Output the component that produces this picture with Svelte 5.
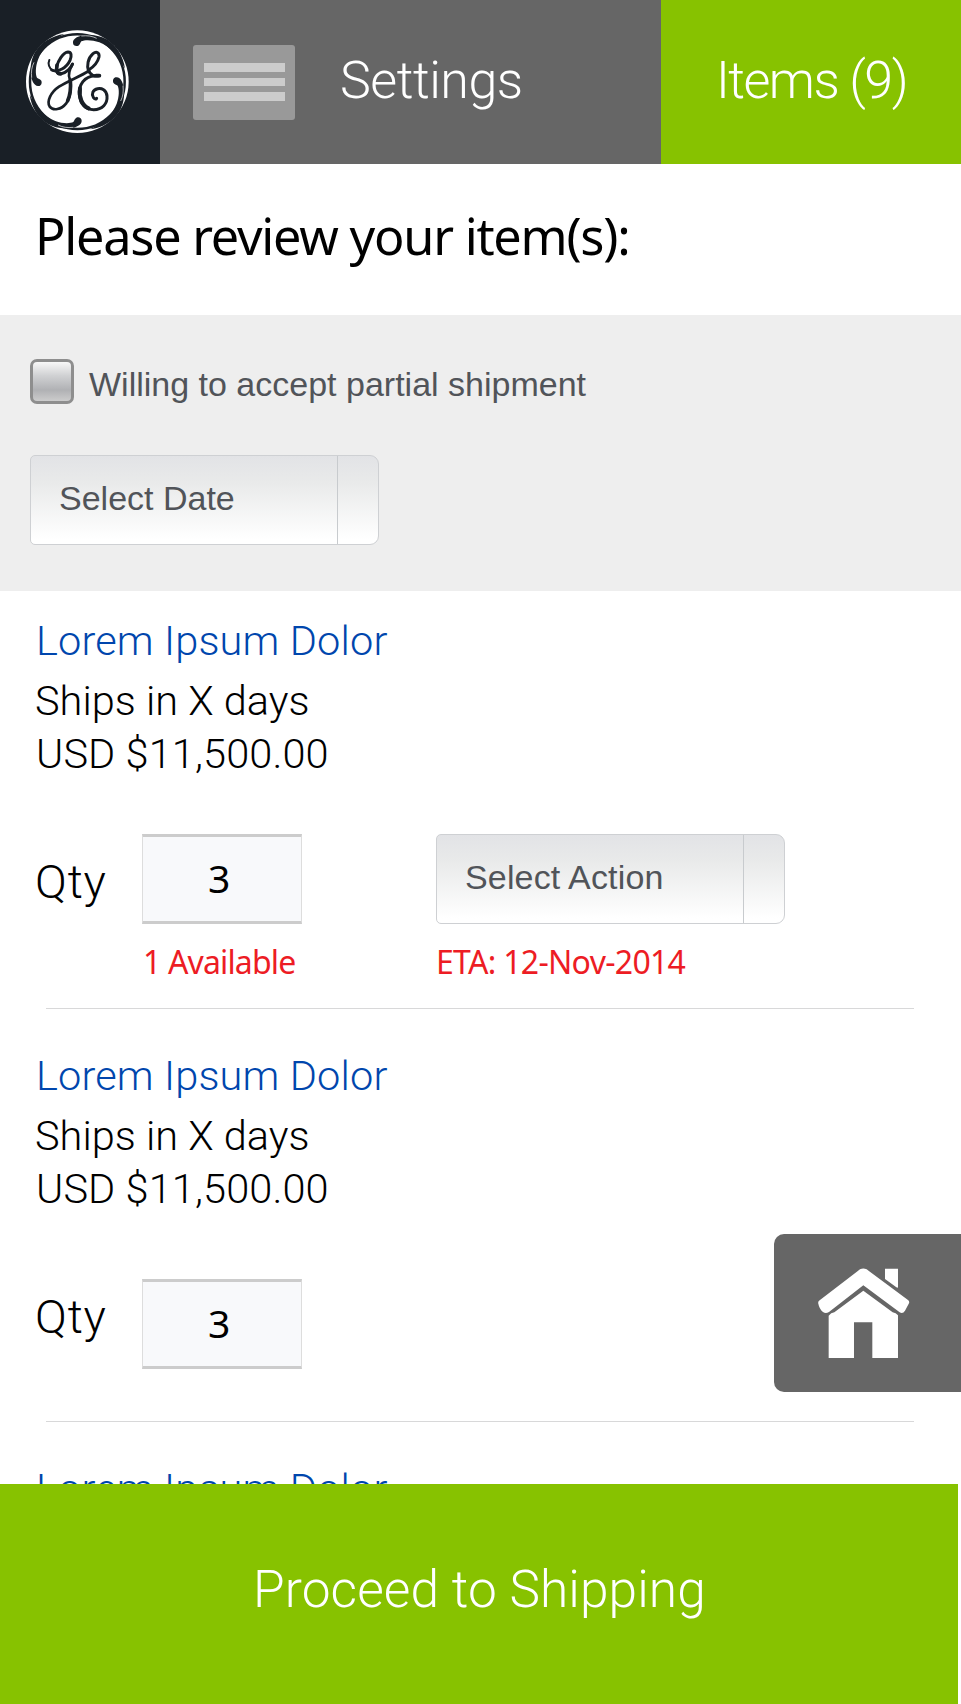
<script>
  const items = [
    {
      name: 'Lorem Ipsum Dolor',
      ships: 'Ships in X days',
      price: 'USD $11,500.00',
      qty: 3,
      available: '1 Available',
      action: 'Select Action',
      eta: 'ETA: 12-Nov-2014'
    },
    { name: 'Lorem Ipsum Dolor', ships: 'Ships in X days', price: 'USD $11,500.00', qty: 3 },
    { name: 'Lorem Ipsum Dolor' }
  ];
  const swirls = [0, 90, 180, 270];
</script>

<div class="screen">
  <header>
    <div class="brand">
      <svg viewBox="0 0 480 492" width="160" height="164" aria-hidden="true">
        <circle cx="232" cy="245" r="154" fill="#fff" />
        <circle cx="232" cy="245" r="142" fill="none" stroke="#191f26" stroke-width="7.5" />
        {#each swirls as angle}
          <path
            transform="rotate({angle} 232 245)"
            d="M219 128C218 115 237 106 260 105C286 104 304 109 320 118C350 136 370 169 375 206C355 167 329 139 298 127C277 119 254 119 244 124C241 128 240 134 235 137C227 140 219 136 219 128Z"
            fill="#191f26"
          />
          <path
            transform="rotate({angle} 232 245)"
            d="M244 108C262 106 276 108 290 115"
            fill="none"
            stroke="#fff"
            stroke-width="2"
          />
        {/each}
        <g fill="none" stroke="#191f26" stroke-linecap="round" stroke-linejoin="round">
          <path stroke-width="6" d="M148 180C143 191 147 205 158 211" />
          <path stroke-width="9" d="M155 210C174 219 200 203 210 181C216 166 214 156 204 156C189 157 174 183 170 200C167 217 175 225 185 221C200 217 213 204 217 193" />
          <path stroke-width="11" d="M171 195C168 212 172 222 182 221" />
          <path stroke-width="8" d="M218 192C208 209 204 224 209 236C215 254 214 288 198 311C184 329 159 333 149 320C139 304 153 276 177 260C206 242 239 230 266 213" />
          <path stroke-width="11" d="M211 240C213 263 211 284 203 302" />
          <path stroke-width="9" d="M266 216C259 197 264 174 279 161C290 152 299 159 297 171C293 188 277 203 266 210C270 226 284 231 299 227" />
          <path stroke-width="9" d="M285 227C253 229 236 254 238 283C240 313 257 329 281 329C307 329 323 311 321 288C319 269 305 264 293 266C278 269 274 282 280 292C284 298 290 298 290 295" />
          <path stroke-width="12" d="M240 265C236 292 247 317 266 325" />
          <path stroke-width="11" d="M288 227L298 227" />
        </g>
      </svg>
    </div>
    <div class="nav">
      <button class="menu" aria-label="Menu"><i></i><i></i><i></i></button>
      <span class="settings">Settings</span>
    </div>
    <div class="cart"><span>Items (9)</span></div>
  </header>

  <h1>Please review your item(s):</h1>

  <section class="options">
    <label class="partial">
      <span class="box"></span>
      <span class="caption">Willing to accept partial shipment</span>
    </label>
    <div class="select"><span>Select Date</span><b></b></div>
  </section>

  <main>
    {#each items as item}
      <article class:compact={!item.action}>
        <h2>{item.name}</h2>
        {#if item.qty}
          <p>{item.ships}</p>
          <p class="price">{item.price}</p>
          <div class="row">
            <span class="label">Qty</span>
            <div class="qty"><span>{item.qty}</span></div>
            {#if item.action}
              <div class="select action"><span>{item.action}</span><b></b></div>
            {/if}
          </div>
        {/if}
        {#if item.eta}
          <div class="notes">
            <span class="available">{item.available}</span>
            <span class="eta">{item.eta}</span>
          </div>
        {/if}
      </article>
    {/each}
  </main>

  <footer><span>Proceed to Shipping</span></footer>

  <button class="home" aria-label="Home">
    <svg viewBox="174 143 275 271" width="91.67" height="90.33" aria-hidden="true" fill="#fff">
      <path d="M300 147Q310 142 320 147L445 240Q449 244 447 249L435 271Q429 281 419 276L310 195L207 275Q197 281 189 275Q178 266 175 250Q173 244 179 240Z" />
      <path d="M310 211L398 276Q408 277 414 285V413H337V306H282V413H206V286Q213 277 223 276Z" />
      <path d="M375 145H414V202Q409 202 404 197L375 176Z" />
    </svg>
  </button>
</div>

<style>
  :global(body) {
    background: #fff;
    overflow: hidden;
  }
  .screen {
    position: relative;
    width: 961px;
    height: 1704px;
    overflow: hidden;
    background: #fff;
    color: #000;
    font-family: Roboto, sans-serif;
    font-weight: 300;
    white-space: nowrap;
  }
  h1, h2, p { margin: 0; }
  button { border: 0; margin: 0; padding: 0; }
  svg { display: block; }

  header {
    display: flex;
    height: 164px;
    color: #fff;
    font-size: 52px;
    line-height: 60px;
  }
  .brand {
    width: 160px;
    background: #191f26;
  }
  .nav {
    display: flex;
    align-items: center;
    width: 501px;
    box-sizing: border-box;
    padding-left: 33px;
    background: #666;
  }
  .menu {
    display: flex;
    flex-direction: column;
    justify-content: center;
    align-items: center;
    gap: 6px;
    width: 102px;
    height: 75px;
    border-radius: 3px;
    background: #999;
  }
  .menu i {
    width: 81px;
    height: 8.5px;
    background: #ccc;
  }
  .settings {
    margin-left: 45px;
    padding-bottom: 2px;
    letter-spacing: -0.5px;
  }
  .cart {
    display: flex;
    flex: 1;
    align-items: center;
    padding-left: 55px;
    background: #87c200;
    letter-spacing: -1.55px;
  }
  .cart span { padding-bottom: 2px; }

  h1 {
    height: 151px;
    padding-left: 35px;
    font: 400 50.4px/144px "Noto Sans", sans-serif;
    letter-spacing: -1.23px;
  }

  .options {
    box-sizing: border-box;
    height: 276px;
    padding: 44px 30px 0;
    background: #eee;
  }
  .partial {
    display: flex;
    align-items: center;
    height: 45px;
    color: #515459;
    font: 400 34px/40px "Liberation Sans", sans-serif;
  }
  .box {
    box-sizing: border-box;
    width: 44px;
    height: 45px;
    border: 3px solid #8e8e8e;
    border-radius: 7px;
    background: linear-gradient(#f8f8f8, #d0d1d3 35%, #b0b1b4 72%, #ccc);
  }
  .caption {
    margin-left: 15px;
    padding-top: 4px;
  }
  .options .select { margin-top: 51px; }

  .select {
    display: flex;
    box-sizing: border-box;
    width: 349px;
    height: 90px;
    border: 1px solid #ced0d3;
    border-radius: 5px 9px 9px 5px;
    background: linear-gradient(#e2e3e6, #e9eaea 30%, #fff 95%);
    color: #515459;
    font: 400 34px/84px "Liberation Sans", sans-serif;
  }
  .select span {
    flex: 1;
    padding-left: 28px;
  }
  .select b {
    width: 40px;
    border-left: 1px solid #c8cbce;
  }
  .action { letter-spacing: 0.15px; }

  main {
    height: 893px;
    overflow: hidden;
  }
  article {
    position: relative;
    box-sizing: border-box;
    height: 418px;
    padding: 20px 36px 0;
  }
  article.compact {
    height: 413px;
    padding-top: 37px;
  }
  article::after {
    content: '';
    display: block;
    width: 868px;
    height: 1px;
    margin: 10px 0 0 10px;
    background: #d8d8d9;
  }
  article.compact::after { margin-top: 51px; }
  h2 {
    margin-bottom: 3px;
    color: #0046ad;
    font-size: 41.5px;
    font-weight: 300;
    line-height: 60px;
    letter-spacing: 0.15px;
  }
  p {
    margin-left: -1px;
    font-size: 41.5px;
    line-height: 53px;
  }
  .price {
    margin-left: 0;
    letter-spacing: 0.1px;
  }
  .row {
    display: flex;
    align-items: flex-start;
    height: 91px;
    margin-top: 54px;
  }
  .compact .row { margin-top: 64px; }
  .label {
    width: 107px;
    margin-left: -1px;
    padding-top: 21px;
    font-size: 47px;
    line-height: 54px;
    letter-spacing: 0.8px;
  }
  .compact .label { padding-top: 11px; }
  .qty {
    box-sizing: border-box;
    width: 160px;
    height: 90px;
    border: solid #ccc;
    border-width: 3px 1px;
    border-left-color: #ddd;
    border-right-color: #ddd;
    background: #f8f9fb;
    font: 400 39px/82px "Noto Sans", sans-serif;
  }
  .qty span { padding-left: 65px; }
  .row .select { margin-left: 134px; }
  .notes {
    display: flex;
    color: #ed1c24;
    font: 400 32px/73px "Noto Sans", sans-serif;
  }
  .available {
    width: 293px;
    padding-left: 107px;
    letter-spacing: -0.85px;
  }
  .eta { letter-spacing: -0.7px; }

  footer {
    display: flex;
    width: 958px;
    height: 220px;
    box-sizing: border-box;
    padding: 77px 0 0 253px;
    background: #87c200;
    color: #fff;
    font-size: 51.4px;
    line-height: 58px;
    letter-spacing: 0.1px;
  }

  .home {
    position: absolute;
    top: 1234px;
    right: 0;
    display: flex;
    width: 187px;
    height: 158px;
    padding: 34px 0 0 44px;
    box-sizing: border-box;
    border-radius: 10px 0 0 10px;
    background: #666;
  }
</style>
